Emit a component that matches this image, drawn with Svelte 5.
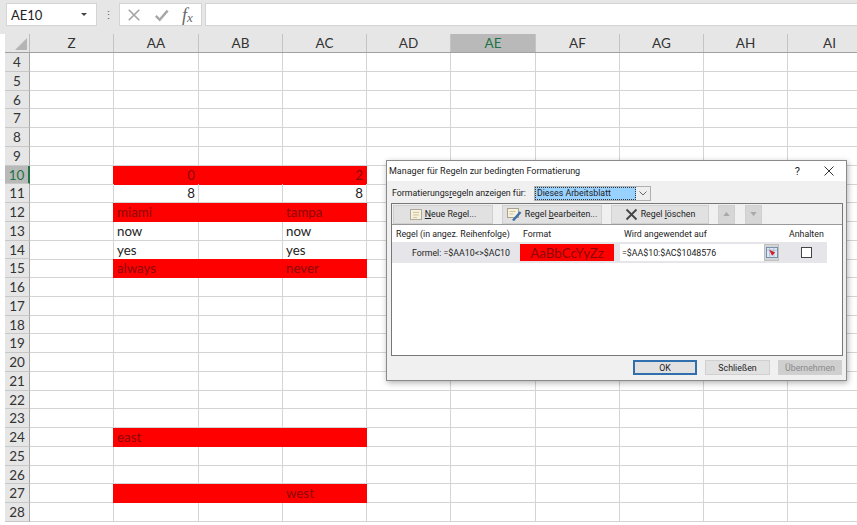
<script>
  const columns = [
    { name: "Z", width: 84 },
    { name: "AA", width: 85 },
    { name: "AB", width: 84 },
    { name: "AC", width: 84 },
    { name: "AD", width: 84 },
    { name: "AE", width: 85 },
    { name: "AF", width: 84 },
    { name: "AG", width: 84 },
    { name: "AH", width: 84 },
    { name: "AI", width: 84 }
  ];

  const rowNumbers = [4, 5, 6, 7, 8, 9, 10, 11, 12, 13, 14, 15, 16, 17, 18, 19, 20, 21, 22, 23, 24, 25, 26, 27, 28];
  const redRows = [10, 12, 15, 24, 27];

  const cells = {
    "10AA": { text: "0", right: true },
    "10AC": { text: "2", right: true },
    "11AA": { text: "8", right: true },
    "11AC": { text: "8", right: true },
    "12AA": { text: "miami" },
    "12AC": { text: "tampa" },
    "13AA": { text: "now" },
    "13AC": { text: "now" },
    "14AA": { text: "yes" },
    "14AC": { text: "yes" },
    "15AA": { text: "always" },
    "15AC": { text: "never" },
    "24AA": { text: "east" },
    "27AC": { text: "west" }
  };

  const gridColumns = columns.map((c) => c.width + "px").join(" ");

  function isRed(row, col) {
    return redRows.includes(row) && ["AA", "AB", "AC"].includes(col);
  }
</script>

<div class="excel">
  <div class="formula-bar">
    <div class="name-box">
      <span>AE10</span>
      <i class="name-arrow"></i>
    </div>
    <div class="grip">⋮</div>
    <div class="fx-buttons">
      <svg width="14" height="14" viewBox="0 0 16 16">
        <path d="M2 2 L14 14 M14 2 L2 14" stroke="#a6a6a6" stroke-width="2" fill="none" />
      </svg>
      <svg width="15" height="14" viewBox="0 0 16 16">
        <path d="M1.500 9 L6 13.500 L15 3" stroke="#a6a6a6" stroke-width="2.800" fill="none" />
      </svg>
      <span class="fx">f<sub>x</sub></span>
    </div>
    <div class="formula-input"></div>
  </div>

  <div class="sheet">
    <div class="head-row" style="grid-template-columns: {gridColumns}">
      {#each columns as col}
        <div class="col-head" class:active={col.name === "AE"}>{col.name}</div>
      {/each}
    </div>
    <div class="corner"><i></i></div>

    {#each rowNumbers as row}
      <div class="row">
        <div class="row-head" class:active={row === 10}>{row}</div>
        <div class="cells" style="grid-template-columns: {gridColumns}">
          {#each columns as col}
            {@const cell = cells[row + col.name]}
            <div class="cell" class:red={isRed(row, col.name)} class:right={cell?.right}>
              {#if cell}{cell.text}{/if}
            </div>
          {/each}
        </div>
      </div>
    {/each}
  </div>

  <div class="dialog">
    <div class="title-bar">
      <span class="title">Manager für Regeln zur bedingten Formatierung</span>
      <span class="help">?</span>
      <svg class="close" width="10" height="10" viewBox="0 0 10 10">
        <path d="M0.500 0.500 L9.500 9.500 M9.500 0.500 L0.500 9.500" stroke="#333" stroke-width="1" fill="none" />
      </svg>
    </div>

    <div class="body">
      <div class="show-row">
        <span>Formatierungs<u>r</u>egeln anzeigen für:</span>
        <div class="select">
          <span class="select-value">Dieses Arbeitsblatt</span>
          <span class="select-btn">
            <svg width="8" height="5" viewBox="0 0 8 5"><path d="M0.500 0.500 L4 4 L7.500 0.500" stroke="#666" fill="none" /></svg>
          </span>
        </div>
      </div>

      <div class="rules-box">
        <div class="toolbar">
          <button class="tool wide-new">
            <svg width="12" height="11" viewBox="0 0 12 11">
              <rect x="0.500" y="0.500" width="11" height="10" fill="#f4f0e2" stroke="#b0aa96" />
              <path d="M3 3.500h6M3 6h6M3 8.500h4" stroke="#d8c48c" />
            </svg>
            <span><u>N</u>eue Regel...</span>
          </button>
          <button class="tool wide-edit">
            <svg width="15" height="13" viewBox="0 0 15 13">
              <rect x="0.500" y="0.500" width="11" height="9" fill="#f4f0e2" stroke="#a9a28c" />
              <path d="M2.500 3.500h6M2.500 6h4" stroke="#d8c48c" />
              <path d="M6 12.500 L13.500 4" stroke="#3f6fa8" stroke-width="2.400" />
            </svg>
            <span>Regel <u>b</u>earbeiten...</span>
          </button>
          <button class="tool wide-del">
            <svg width="13" height="13" viewBox="0 0 13 13">
              <path d="M1.500 1.500 L11.500 11.500 M11.500 1.500 L1.500 11.500" stroke="#444" stroke-width="1.800" fill="none" />
            </svg>
            <span>Regel <u>l</u>öschen</span>
          </button>
          <button class="tool arrow up" aria-label="Nach oben">
            <svg width="7" height="4" viewBox="0 0 8 5"><path d="M4 0 L8 5 H0 Z" fill="#a8a8a8" /></svg>
          </button>
          <button class="tool arrow" aria-label="Nach unten">
            <svg width="7" height="4" viewBox="0 0 8 5"><path d="M0 0 H8 L4 5 Z" fill="#a8a8a8" /></svg>
          </button>
        </div>

        <div class="table-head">
          <span class="h-rule">Regel (in angez. Reihenfolge)</span>
          <span class="h-format">Format</span>
          <span class="h-range">Wird angewendet auf</span>
          <span class="h-stop">Anhalten</span>
        </div>

        <div class="rule-row">
          <span class="rule-name">Formel: =$AA10&lt;&gt;$AC10</span>
          <span class="rule-format">AaBbCcYyZz</span>
          <div class="range-input">
            <span>=$AA$10:$AC$1048576</span>
            <span class="range-btn">
              <svg width="12" height="11" viewBox="0 0 13 12">
                <rect x="0.500" y="0.500" width="12" height="11" fill="#dfe8f3" stroke="#6d87a8" />
                <path d="M0.500 3.500h12M4 0.500v11M8.500 0.500v11" stroke="#9db2cc" stroke-width="0.800" />
                <path d="M3.500 3 L10 6 L6.500 9.500 Z" fill="#d0202a" />
              </svg>
            </span>
          </div>
          <span class="rule-stop"><i class="checkbox"></i></span>
        </div>
      </div>

      <div class="actions">
        <button class="action ok">OK</button>
        <button class="action close-btn">Schließen</button>
        <button class="action disabled">Übernehmen</button>
      </div>
    </div>
  </div>
</div>

<style>
  :global(body) {
    margin: 0;
    overflow: hidden;
    background: #fff;
  }

  .excel {
    position: relative;
    width: 857px;
    height: 525px;
    overflow: hidden;
    font-family: Lato, "Liberation Sans", sans-serif;
    color: #222;
  }

  .formula-bar {
    display: flex;
    align-items: center;
    height: 34px;
    padding: 3px 0 8px 6px;
    box-sizing: border-box;
    background: #e6e6e6;
  }

  .name-box {
    display: flex;
    align-items: center;
    justify-content: space-between;
    width: 91px;
    height: 23px;
    padding: 0 5px 0 4px;
    box-sizing: border-box;
    background: #fff;
    border: 1px solid #d4d4d4;
    font-size: 13px;
  }

  .name-arrow {
    border-left: 3px solid transparent;
    border-right: 3px solid transparent;
    border-top: 3px solid #444;
    margin-right: 4px;
  }

  .grip {
    width: 22px;
    text-align: center;
    font-size: 11px;
    color: #666;
  }

  .fx-buttons {
    display: flex;
    align-items: center;
    gap: 13px;
    width: 83px;
    height: 23px;
    padding-left: 7px;
    box-sizing: border-box;
    background: #fff;
    border: 1px solid #d4d4d4;
  }

  .fx {
    font-family: "Liberation Serif", serif;
    font-style: italic;
    font-size: 18px;
    line-height: 1;
    color: #666;
  }

  .fx sub {
    font-size: 13px;
    vertical-align: -1px;
  }

  .formula-input {
    flex: 1;
    height: 23px;
    margin-left: 3px;
    box-sizing: border-box;
    background: #fff;
    border: 1px solid #d4d4d4;
    border-right: none;
  }

  .sheet {
    position: relative;
    padding-left: 5px;
  }

  .corner {
    position: absolute;
    left: 5px;
    top: 0;
    width: 25px;
    height: 18px;
    background: #e6e6e6;
    border-right: 1px solid #bdbdbd;
    box-sizing: border-box;
  }

  .corner i {
    position: absolute;
    right: 2px;
    bottom: 2px;
    border-left: 12px solid transparent;
    border-bottom: 12px solid #b5b5b5;
  }

  .head-row {
    display: grid;
    height: 19px;
    padding-left: 25px;
    background: #e6e6e6;
    border-bottom: 1px solid #a0a0a0;
    box-sizing: border-box;
    overflow: hidden;
  }

  .col-head {
    padding-top: 1px;
    text-align: center;
    line-height: 17px;
    border-right: 1px solid #c4c4c4;
    box-sizing: border-box;
    font-size: 13.500px;
    color: #333;
  }

  .col-head.active {
    background: #b9b9b9;
    color: #217346;
    border-bottom: 1px solid #217346;
  }

  .row {
    display: flex;
    height: 18.750px;
  }

  .row-head {
    flex: none;
    width: 25px;
    padding-top: 1px;
    text-align: center;
    line-height: 17px;
    box-sizing: border-box;
    background: #e6e6e6;
    border-right: 1px solid #a8a8a8;
    border-bottom: 1px solid #c8c8c8;
    font-size: 13.500px;
    color: #333;
  }

  .row-head.active {
    background: #b9b9b9;
    color: #217346;
    border-right: 2px solid #217346;
  }

  .cells {
    display: grid;
    flex: none;
  }

  .cell {
    box-sizing: border-box;
    padding: 1px 3px 0;
    border-right: 1px solid #d4d4d4;
    border-bottom: 1px solid #d4d4d4;
    font-size: 13.300px;
    line-height: 17px;
    white-space: nowrap;
    color: #222;
  }

  .cell.right {
    text-align: right;
  }

  .cell.red {
    background: #ff0000;
    border-color: #ff0000;
    box-shadow: -1px 0 0 #ff0000;
    color: #8c0808;
  }

  .dialog {
    position: absolute;
    left: 386px;
    top: 160px;
    width: 461px;
    height: 221px;
    display: flex;
    flex-direction: column;
    box-sizing: border-box;
    background: #f0f0f0;
    border: 1px solid #8a8a8a;
    box-shadow: 1px 2px 6px rgba(0, 0, 0, 0.3);
    font-family: Roboto, "Noto Sans", sans-serif;
    font-size: 8.800px;
    color: #222;
  }

  .title-bar {
    flex: none;
    display: flex;
    align-items: center;
    height: 20px;
    padding: 0 12px 0 2px;
    background: #fff;
  }

  .title {
    flex: 1;
    font-size: 9px;
  }

  .help {
    margin-right: 24px;
    font-size: 11px;
  }

  .body {
    flex: 1;
    display: flex;
    flex-direction: column;
    padding: 4px 3px 5px 4px;
    min-height: 0;
  }

  .show-row {
    display: flex;
    align-items: center;
    gap: 8px;
    height: 16px;
    margin-bottom: 2px;
    padding-left: 1px;
  }

  .select {
    display: flex;
    height: 15px;
    width: 117px;
    background: #fff;
    border: 1px solid #b0b0b0;
    box-sizing: border-box;
  }

  .select-value {
    flex: 1;
    background: #99d1ff;
    outline: 1px dotted #333;
    outline-offset: -1px;
    padding-left: 2px;
    line-height: 13px;
  }

  .select-btn {
    flex: none;
    display: flex;
    align-items: center;
    justify-content: center;
    width: 14px;
    background: #eee;
  }

  .rules-box {
    flex: 1;
    display: flex;
    flex-direction: column;
    box-sizing: border-box;
    border: 1px solid #777;
    background: #fff;
    min-height: 0;
    width: 452px;
  }

  .toolbar {
    flex: none;
    display: flex;
    align-items: center;
    gap: 9px;
    height: 21px;
    padding-left: 1px;
    background: #f0f0f0;
    border-bottom: 1px solid #999;
    box-sizing: border-box;
  }

  button {
    font: inherit;
    color: inherit;
    border: none;
    padding: 0;
  }

  .tool {
    display: flex;
    align-items: center;
    justify-content: center;
    gap: 3px;
    height: 19px;
    background: #e1e1e1;
    border: 1px solid #d0d0d0;
    box-sizing: border-box;
  }

  .wide-new { width: 100px; }
  .wide-edit { width: 100px; }
  .wide-del { width: 98px; }
  .arrow { width: 17px; background: #d6d6d6; }
  .arrow.up { margin-right: 1px; }

  .table-head {
    flex: none;
    display: grid;
    grid-template-columns: 128px 100px 165px auto;
    height: 17px;
    align-items: center;
    white-space: nowrap;
  }

  .h-rule { padding-left: 4px; }
  .h-format { padding-left: 3px; }
  .h-range { padding-left: 4px; }
  .h-stop { padding-left: 4px; }

  .rule-row {
    flex: none;
    display: grid;
    grid-template-columns: 128px 100px 165px 42px;
    width: 435px;
    height: 21px;
    align-items: center;
    background: #e6e6ea;
    white-space: nowrap;
  }

  .rule-name {
    text-align: right;
    padding-right: 10px;
  }

  .rule-format {
    display: flex;
    align-items: center;
    justify-content: center;
    width: 94px;
    height: 17px;
    padding-top: 1px;
    box-sizing: border-box;
    background: #ff0000;
    color: #8c0808;
    font-family: Lato, sans-serif;
    font-size: 13.300px;
  }

  .range-input {
    display: flex;
    align-items: center;
    justify-content: space-between;
    width: 159px;
    height: 17px;
    padding-left: 2px;
    box-sizing: border-box;
    background: #fff;
  }

  .range-btn {
    display: flex;
    align-items: center;
    justify-content: center;
    width: 15px;
    height: 17px;
    background: #d4d4d4;
    border: 1px solid #c0c0c0;
    box-sizing: border-box;
  }

  .rule-stop {
    display: flex;
    justify-content: center;
  }

  .checkbox {
    display: block;
    width: 11px;
    height: 11px;
    box-sizing: border-box;
    background: #fff;
    border: 1px solid #444;
  }

  .actions {
    flex: none;
    display: flex;
    justify-content: flex-end;
    gap: 8px;
    margin-top: 4px;
    padding-right: 1px;
  }

  .action {
    width: 65px;
    height: 15px;
    box-sizing: border-box;
    background: #e1e1e1;
    border: 1px solid #d0d0d0;
    line-height: 12px;
  }

  .action.ok {
    width: 64px;
    border: 2px solid #2f6fae;
    line-height: 10px;
  }

  .action.disabled {
    width: 64px;
    background: #cfcfcf;
    color: #8a8a8a;
  }
</style>
